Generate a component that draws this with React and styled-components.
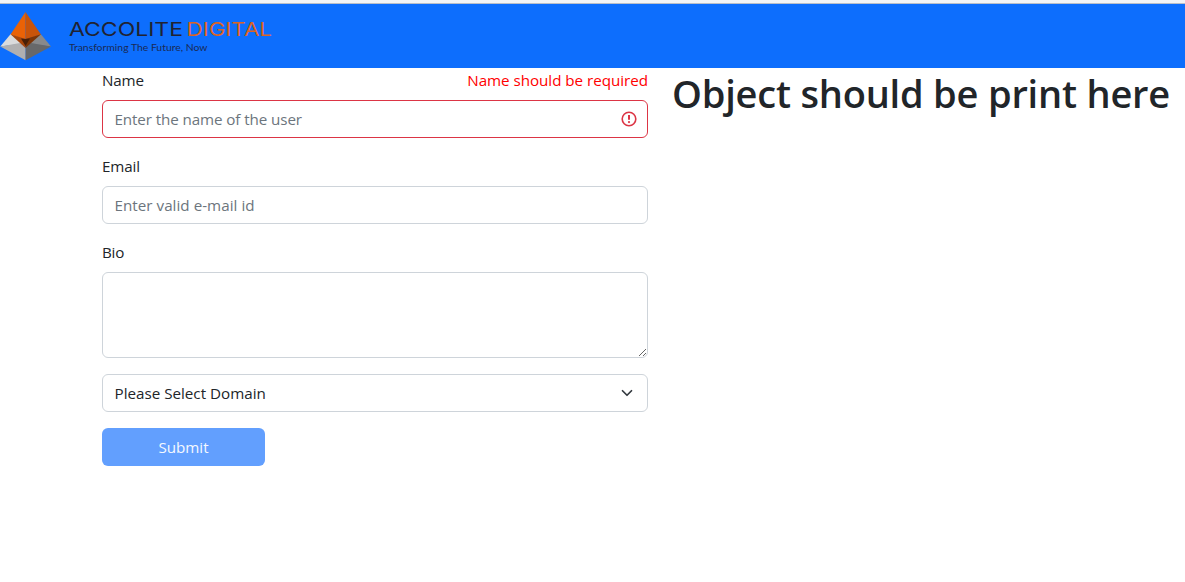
import React from 'react';
import styled, { createGlobalStyle } from 'styled-components';

const GlobalStyle = createGlobalStyle`
  *, *::before, *::after { box-sizing: border-box; }
  body {
    margin: 0;
    background: #fff;
    color: #212529;
    font: 400 15.2px/24px "Open Sans", "Noto Sans", sans-serif;
    overflow: hidden;
  }
`;

const TopEdge = styled.div`
  height: 4px;
  background: #f3f4f6;
  border-bottom: 1px solid #b9bec8;
`;

const Navbar = styled.nav`
  height: 64px;
  background: #0d6efd;
`;

const Logo = styled.svg`
  display: block;
  width: 280px;
  height: 64px;
`;

const Columns = styled.main`
  display: grid;
  grid-template-columns: 546px 1fr;
  column-gap: 24px;
  padding-left: 102px;
`;

const Form = styled.form`
  display: flex;
  flex-direction: column;
  gap: 16px;
`;

const Field = styled.div`
  display: flex;
  flex-direction: column;
  gap: 8px;
`;

const LabelRow = styled.div`
  display: flex;
  justify-content: space-between;
  height: 24px;
`;

const Text = styled.span`
  color: ${(p) => p.$color || '#212529'};
  letter-spacing: ${(p) => p.$spacing || 0}px;
  line-height: 24px;
  white-space: nowrap;
`;

const Control = styled.div`
  display: flex;
  align-items: center;
  justify-content: space-between;
  height: 38px;
  padding: 0 10px 0 11.5px;
  border: 1px solid ${(p) => (p.$invalid ? '#dc3545' : '#ced4da')};
  border-radius: 6px;
  background: #fff;
`;

const TextArea = styled.textarea`
  display: block;
  width: 100%;
  height: 86px;
  padding: 6px 12px;
  border: 1px solid #ced4da;
  border-radius: 6px;
  font: inherit;
  resize: vertical;
  outline: none;
`;

const SubmitButton = styled.button`
  display: flex;
  align-items: center;
  justify-content: center;
  width: 163px;
  height: 38px;
  padding: 0;
  border: 0;
  border-radius: 6px;
  background: #629ffe;
  font: inherit;
`;

const Heading = styled.h1`
  margin: 1px 0 0;
  font-size: 38px;
  font-weight: 600;
  line-height: 48px;
  letter-spacing: -0.2px;
  white-space: nowrap;
`;

const ErrorIcon = styled.svg`
  width: 16px;
  height: 16px;
`;

const Chevron = styled.svg`
  width: 12px;
  height: 12px;
  margin-right: 4px;
`;

function Brand() {
  return (
    <Logo viewBox="0 4 280 64">
      <polygon points="10.7,34 0.3,46.6 20,44 25.5,40" fill="#dadbdc" />
      <polygon points="0.3,46.6 20,43 25.6,47 25.6,60.2" fill="#b0b0b1" />
      <polygon points="40.7,34 51,46.6 31,44 25.5,40" fill="#88898b" />
      <polygon points="51,46.6 31,43 25.6,47 25.6,60.2" fill="#67686a" />
      <polygon points="25.5,12 10.5,34.4 25.5,39.4" fill="#ea6206" />
      <polygon points="25.5,12 41,34.4 25.5,39.4" fill="#c9540a" />
      <polygon points="10.5,34.2 25.5,39 25.5,48" fill="#a84509" />
      <polygon points="41,34.2 25.5,39 25.5,48" fill="#7d3506" />
      <polygon points="21,38.4 25.5,39 30,38.4 25.5,46" fill="#482008" />
      <g fontFamily="Inter, sans-serif" fontWeight="400">
        <text x="69" y="36" fontSize="19" fill="#202332" textLength="114" lengthAdjust="spacingAndGlyphs">ACCOLITE</text>
        <text x="186.5" y="36" fontSize="19" fill="#dc6424" textLength="85.5" lengthAdjust="spacingAndGlyphs">DIGITAL</text>
        <text x="69" y="51" fontFamily="Lato, sans-serif" fontSize="10" fill="#1a2a55" textLength="138.5" lengthAdjust="spacingAndGlyphs">Transforming The Future, Now</text>
      </g>
    </Logo>
  );
}

export default function App() {
  return (
    <>
      <GlobalStyle />
      <TopEdge />
      <Navbar><Brand /></Navbar>
      <Columns>
        <Form>
          <Field>
            <LabelRow>
              <Text $spacing={-0.15}>Name</Text>
              <Text $color="#ff0000" $spacing={-0.03}>Name should be required</Text>
            </LabelRow>
            <Control $invalid>
              <Text $color="#6c757d" $spacing={-0.1}>Enter the name of the user</Text>
              <ErrorIcon viewBox="0 0 16 16" fill="none" stroke="#dc3545">
                <circle cx="8" cy="8" r="6.8" strokeWidth="1.6" />
                <path d="M8 4v4.8" strokeWidth="2" />
                <circle cx="8" cy="11.1" r="1.1" fill="#dc3545" stroke="none" />
              </ErrorIcon>
            </Control>
          </Field>
          <Field>
            <LabelRow><Text $spacing={-0.15}>Email</Text></LabelRow>
            <Control><Text $color="#6c757d" $spacing={0.03}>Enter valid e-mail id</Text></Control>
          </Field>
          <Field>
            <LabelRow><Text $spacing={-0.2}>Bio</Text></LabelRow>
            <TextArea />
          </Field>
          <Control>
            <Text>Please Select Domain</Text>
            <Chevron viewBox="0 0 16 16" fill="none" stroke="#343a40" strokeWidth="2.3" strokeLinecap="round" strokeLinejoin="round">
              <path d="m2 5 6 6 6-6" />
            </Chevron>
          </Control>
          <SubmitButton type="button">
            <Text $color="#f4f8ff">Submit</Text>
          </SubmitButton>
        </Form>
        <Heading>Object should be print here</Heading>
      </Columns>
    </>
  );
}
